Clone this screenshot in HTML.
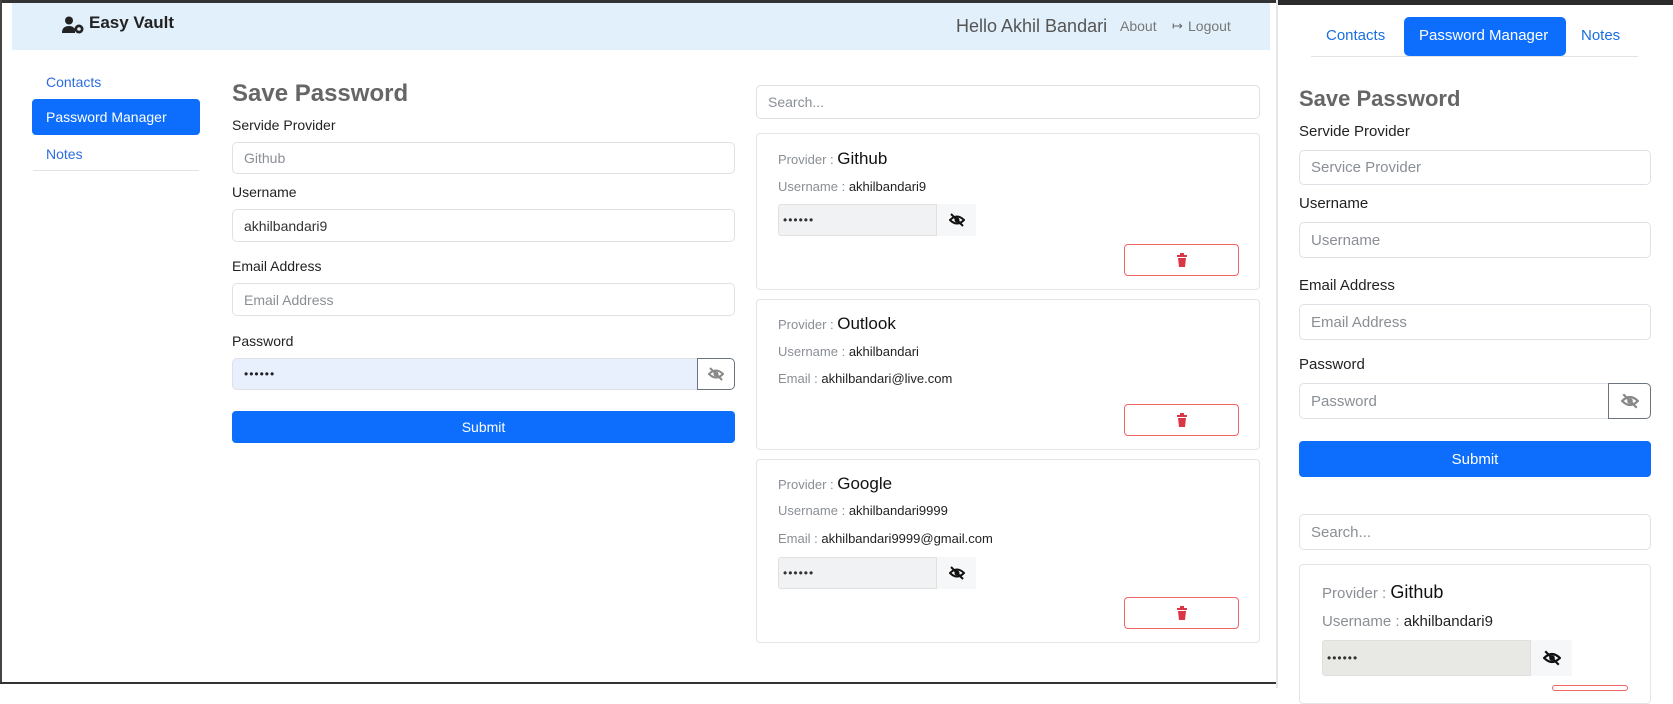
<!DOCTYPE html>
<html><head><meta charset="utf-8"><style>
*{box-sizing:border-box;margin:0;padding:0}
body{width:1673px;height:688px;overflow:hidden;background:#fff;font-family:"Liberation Sans",sans-serif;position:relative}
.a{position:absolute}
.inp{position:absolute;border:1px solid #dee2e6;border-radius:5px;background:#fff;color:#8a8f95;font-size:14px;padding-left:11px;display:flex;align-items:center}
.lbl{position:absolute;font-size:14px;color:#222}
.card{position:absolute;border:1px solid #e3e5e8;border-radius:4px;background:#fff}
.t{position:absolute;font-size:13px;color:#8a8f95;white-space:nowrap}
.t b{font-weight:normal;color:#222}
.t .big{font-size:17px;color:#111}
.pw{position:absolute;background:#f1f2f3;border:1px solid #e0e0e0;border-radius:3px 0 0 3px;font-size:12px;color:#333;padding-left:4px;display:flex;align-items:center;letter-spacing:1px}
.eyeb{position:absolute;background:#f6f7f8;display:flex;align-items:center;justify-content:center}
.del{position:absolute;border:1px solid #e66;border-radius:4px;display:flex;align-items:center;justify-content:center}
.btn{position:absolute;background:#0d6efd;color:#fff;border-radius:4px;font-size:14px;display:flex;align-items:center;justify-content:center}
</style></head><body>
<svg width="0" height="0" style="position:absolute"><defs>
<g id="eye"><path d="M1 8 Q8 1 15 8 Q8 15 1 8Z" fill="none" stroke="currentColor" stroke-width="2"/><circle cx="8" cy="8" r="2.5" fill="currentColor"/><path d="M2 2 L14 14" stroke="currentColor" stroke-width="2"/></g>
<g id="trash"><rect x="1" y="2" width="10" height="2" fill="#dc3545"/><rect x="4" y="0" width="4" height="2" fill="#dc3545"/><path d="M2 5 H10 L9 14 H3Z" fill="#dc3545"/></g>
</defs></svg>

<!-- frame lines -->
<div class="a" style="left:0;top:0;width:1277px;height:3px;background:#333"></div>
<div class="a" style="left:0;top:0;width:2px;height:683px;background:#444"></div>
<div class="a" style="left:0;top:682px;width:1277px;height:2px;background:#333"></div>
<div class="a" style="left:1277px;top:0;width:396px;height:5px;background:#2b2b2b"></div>
<div class="a" style="left:1276px;top:0;width:2px;height:688px;background:#e6e6e6"></div>

<!-- navbar -->
<div class="a" style="left:12px;top:3px;width:1258px;height:47px;background:#e2f0fb"></div>
<svg class="a" style="left:62px;top:16px" width="24" height="18" viewBox="0 0 24 18"><circle cx="7" cy="4.5" r="4" fill="#222"/><path d="M0 17 Q0 10 7 10 Q12 10 13 14 V17Z" fill="#222"/><circle cx="17" cy="13" r="4.5" fill="#222"/><circle cx="17" cy="13" r="1.8" fill="#e2f0fb"/></svg>
<div class="a" style="left:89px;top:13px;font-size:17px;color:#222;font-weight:bold">Easy Vault</div>
<div class="a" style="left:956px;top:16px;font-size:18px;color:#555">Hello Akhil Bandari</div>
<div class="a" style="left:1120px;top:18px;font-size:14px;color:#777">About</div>
<div class="a" style="left:1172px;top:18px;font-size:13px;color:#666">&#x21A6;</div>
<div class="a" style="left:1188px;top:18px;font-size:14px;color:#777">Logout</div>

<!-- sidebar -->
<div class="a" style="left:46px;top:74px;font-size:14px;color:#2d6cdf">Contacts</div>
<div class="a" style="left:32px;top:99px;width:168px;height:36px;background:#0d6efd;border-radius:4px"></div>
<div class="a" style="left:46px;top:109px;font-size:14px;color:#fff">Password Manager</div>
<div class="a" style="left:46px;top:146px;font-size:14px;color:#2d6cdf">Notes</div>
<div class="a" style="left:33px;top:170px;width:166px;height:1px;background:#e3e3e3"></div>

<!-- form -->
<div class="a" style="left:232px;top:80px;font-size:24px;color:#666;font-weight:bold">Save Password</div>
<div class="lbl" style="left:232px;top:117px">Servide Provider</div>
<div class="inp" style="left:232px;top:142px;width:503px;height:32px">Github</div>
<div class="lbl" style="left:232px;top:184px">Username</div>
<div class="inp" style="left:232px;top:209px;width:503px;height:33px;color:#333">akhilbandari9</div>
<div class="lbl" style="left:232px;top:258px">Email Address</div>
<div class="inp" style="left:232px;top:283px;width:503px;height:33px">Email Address</div>
<div class="lbl" style="left:232px;top:333px">Password</div>
<div class="inp" style="left:232px;top:358px;width:466px;height:32px;background:#e8f0fe;color:#222;border-radius:5px 0 0 5px;letter-spacing:1px;font-size:12px">&bull;&bull;&bull;&bull;&bull;&bull;</div>
<div class="a" style="left:697px;top:358px;width:38px;height:32px;border:1px solid #6c757d;border-radius:0 5px 5px 0;color:#888;display:flex;align-items:center;justify-content:center"><svg width="16" height="16" viewBox="0 0 16 16"><use href="#eye"/></svg></div>
<div class="btn" style="left:232px;top:411px;width:503px;height:32px">Submit</div>

<!-- list -->
<div class="inp" style="left:756px;top:85px;width:504px;height:34px">Search...</div>

<div class="card" style="left:756px;top:133px;width:504px;height:157px"></div>
<div class="t" style="left:778px;top:149px">Provider : <b class="big">Github</b></div>
<div class="t" style="left:778px;top:179px">Username : <b>akhilbandari9</b></div>
<div class="pw" style="left:778px;top:204px;width:159px;height:32px">&bull;&bull;&bull;&bull;&bull;&bull;</div>
<div class="eyeb" style="left:937px;top:204px;width:39px;height:32px;color:#111"><svg width="16" height="16" viewBox="0 0 16 16"><use href="#eye"/></svg></div>
<div class="del" style="left:1124px;top:244px;width:115px;height:32px"><svg width="12" height="14" viewBox="0 0 12 14"><use href="#trash"/></svg></div>

<div class="card" style="left:756px;top:299px;width:504px;height:151px"></div>
<div class="t" style="left:778px;top:314px">Provider : <b class="big">Outlook</b></div>
<div class="t" style="left:778px;top:344px">Username : <b>akhilbandari</b></div>
<div class="t" style="left:778px;top:371px">Email : <b>akhilbandari@live.com</b></div>
<div class="del" style="left:1124px;top:404px;width:115px;height:32px"><svg width="12" height="14" viewBox="0 0 12 14"><use href="#trash"/></svg></div>

<div class="card" style="left:756px;top:459px;width:504px;height:184px"></div>
<div class="t" style="left:778px;top:474px">Provider : <b class="big">Google</b></div>
<div class="t" style="left:778px;top:503px">Username : <b>akhilbandari9999</b></div>
<div class="t" style="left:778px;top:531px">Email : <b>akhilbandari9999@gmail.com</b></div>
<div class="pw" style="left:778px;top:557px;width:159px;height:32px">&bull;&bull;&bull;&bull;&bull;&bull;</div>
<div class="eyeb" style="left:937px;top:557px;width:39px;height:32px;color:#111"><svg width="16" height="16" viewBox="0 0 16 16"><use href="#eye"/></svg></div>
<div class="del" style="left:1124px;top:597px;width:115px;height:32px"><svg width="12" height="14" viewBox="0 0 12 14"><use href="#trash"/></svg></div>

<!-- right mobile panel -->
<div class="a" style="left:1326px;top:27px;font-size:15px;color:#1a6fe0">Contacts</div>
<div class="a" style="left:1404px;top:17px;width:162px;height:39px;background:#0d6efd;border-radius:5px"></div>
<div class="a" style="left:1419px;top:27px;font-size:15px;color:#fff">Password Manager</div>
<div class="a" style="left:1581px;top:27px;font-size:15px;color:#1a6fe0">Notes</div>
<div class="a" style="left:1311px;top:56px;width:327px;height:1px;background:#e3e3e3"></div>

<div class="a" style="left:1299px;top:86px;font-size:22px;color:#666;font-weight:bold">Save Password</div>
<div class="lbl" style="left:1299px;top:123px;font-size:15px">Servide Provider</div>
<div class="inp" style="left:1299px;top:150px;width:352px;height:35px;font-size:15px">Service Provider</div>
<div class="lbl" style="left:1299px;top:195px;font-size:15px">Username</div>
<div class="inp" style="left:1299px;top:222px;width:352px;height:36px;font-size:15px">Username</div>
<div class="lbl" style="left:1299px;top:277px;font-size:15px">Email Address</div>
<div class="inp" style="left:1299px;top:304px;width:352px;height:36px;font-size:15px">Email Address</div>
<div class="lbl" style="left:1299px;top:356px;font-size:15px">Password</div>
<div class="inp" style="left:1299px;top:383px;width:310px;height:36px;font-size:15px;border-radius:5px 0 0 5px">Password</div>
<div class="a" style="left:1608px;top:383px;width:43px;height:36px;border:1px solid #6c757d;border-radius:0 5px 5px 0;color:#888;display:flex;align-items:center;justify-content:center"><svg width="18" height="18" viewBox="0 0 16 16"><use href="#eye"/></svg></div>
<div class="btn" style="left:1299px;top:441px;width:352px;height:36px;font-size:15px">Submit</div>
<div class="inp" style="left:1299px;top:514px;width:352px;height:36px;font-size:15px">Search...</div>
<div class="card" style="left:1299px;top:564px;width:352px;height:140px"></div>
<div class="t" style="left:1322px;top:582px;font-size:15px">Provider : <b class="big" style="font-size:18px">Github</b></div>
<div class="t" style="left:1322px;top:613px;font-size:15px">Username : <b>akhilbandari9</b></div>
<div class="pw" style="left:1322px;top:640px;width:209px;height:36px;background:#e8e8e5">&bull;&bull;&bull;&bull;&bull;&bull;</div>
<div class="eyeb" style="left:1531px;top:640px;width:41px;height:36px;color:#111"><svg width="18" height="18" viewBox="0 0 16 16"><use href="#eye"/></svg></div>
<div class="a" style="left:1552px;top:685px;width:76px;height:6px;border:1px solid #e66;border-radius:4px"></div>
</body></html>
